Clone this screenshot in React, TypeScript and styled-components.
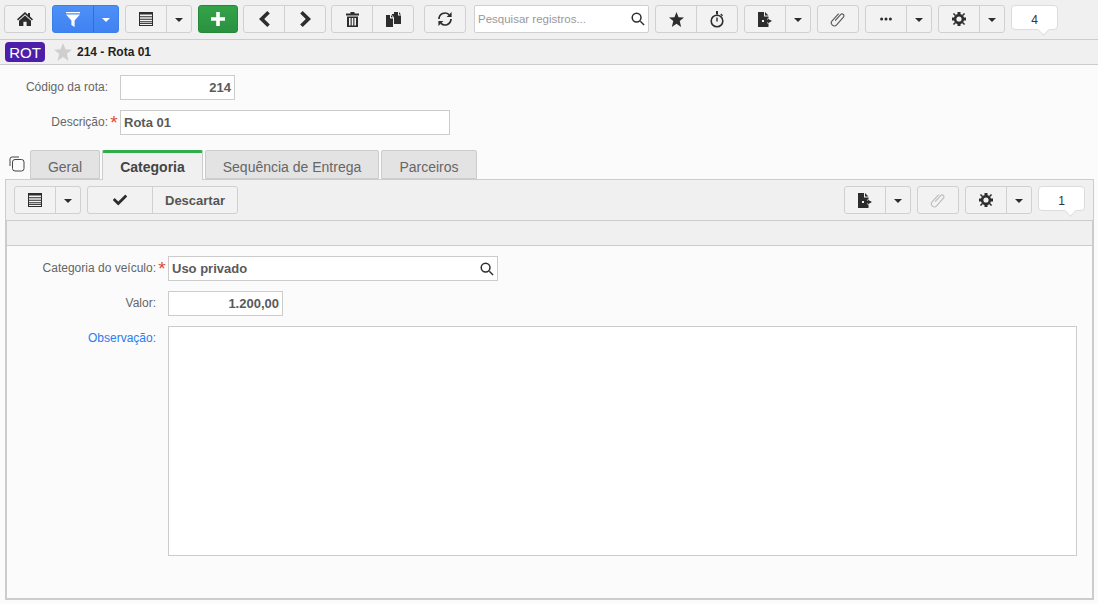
import React from "react";
import styled, { createGlobalStyle } from "styled-components";
import { FaCheck } from "react-icons/fa";

const GlobalStyle = createGlobalStyle`
  html, body { margin: 0; padding: 0; }
  body { font-family: "Liberation Sans", Arial, sans-serif; background: #fbfbfb; }
  * { box-sizing: border-box; }
`;

const Page = styled.div`
  width: 1098px;
  height: 604px;
  overflow: hidden;
  display: flex;
  flex-direction: column;
  color: #555;
`;

const Toolbar = styled.div`
  height: 40px;
  flex: none;
  display: flex;
  align-items: flex-start;
  padding: 5px 4px 0;
  background: #f0f0f0;
  border-bottom: 1px solid #ccc;
`;

const Group = styled.div<{ $gap?: number }>`
  display: flex;
  height: 28px;
  flex: none;
  margin-left: ${(p) => p.$gap ?? 0}px;
  border: 1px solid #d0d0d0;
  border-radius: 3px;
  background: #f2f2f2;
`;

const Seg = styled.div<{ $w: number; $split?: boolean; $color?: string }>`
  width: ${(p) => p.$w}px;
  display: flex;
  align-items: center;
  justify-content: center;
  color: ${(p) => p.$color ?? "#2d2d2d"};
  border-left: ${(p) => (p.$split ? "1px solid #d0d0d0" : "none")};
  font-size: 14px;
`;

const PrimaryGroup = styled(Group)`
  background: linear-gradient(#4d90f7, #3f83f2);
  border-color: #3c7fe8;
  ${Seg} { color: #fff; border-left-color: #2f6fd8; }
`;

const GreenGroup = styled(Group)`
  background: linear-gradient(#33a349, #2b9140);
  border-color: #27883b;
  ${Seg} { color: #fff; }
`;

const Caret = styled.span`
  width: 0;
  height: 0;
  border-left: 4px solid transparent;
  border-right: 4px solid transparent;
  border-top: 4px solid currentColor;
  margin-top: 1px;
`;

const SearchBox = styled.div`
  width: 175px;
  height: 28px;
  flex: none;
  margin-left: 8px;
  display: flex;
  align-items: center;
  justify-content: space-between;
  padding: 0 3px 0 3px;
  background: #fff;
  border: 1px solid #d0d0d0;
  border-radius: 2px;
  font-size: 11.5px;
  color: #999;
  svg { color: #2d2d2d; }
`;

const Counter = styled.div<{ $gap?: number }>`
  position: relative;
  width: 47px;
  height: 25px;
  flex: none;
  margin-left: ${(p) => p.$gap ?? 0}px;
  display: flex;
  align-items: center;
  justify-content: center;
  padding-top: 4px;
  background: #fff;
  border: 1px solid #dcdcdc;
  border-radius: 4px;
  font-size: 12px;
  color: #333;
  &::after {
    content: "";
    position: absolute;
    right: 9px;
    bottom: -5px;
    width: 8px;
    height: 8px;
    background: #fff;
    border-right: 1px solid #dcdcdc;
    border-bottom: 1px solid #dcdcdc;
    transform: rotate(45deg);
  }
`;

const TitleBar = styled.div`
  height: 25px;
  flex: none;
  display: flex;
  align-items: center;
  padding-left: 5px;
  background: #f0f0f0;
  border-bottom: 1px solid #ccc;
`;

const Badge = styled.span`
  width: 40px;
  height: 20px;
  display: flex;
  align-items: center;
  justify-content: center;
  border-radius: 4px;
  background: #4d1fa8;
  color: #fff;
  font-size: 15px;
`;

const TitleStar = styled.span`
  display: flex;
  margin-left: 9px;
  color: #cfcfcf;
`;

const Title = styled.span`
  margin-left: 5px;
  font-size: 12px;
  font-weight: bold;
  color: #222;
`;

const Fields = styled.div<{ $labelWidth: number }>`
  display: grid;
  grid-template-columns: ${(p) => p.$labelWidth}px 12px 1fr;
  row-gap: 10px;
  padding-top: 10px;
  justify-items: start;
`;

const Label = styled.div<{ $link?: boolean }>`
  justify-self: end;
  line-height: 25px;
  font-size: 12px;
  color: ${(p) => (p.$link ? "#2a7bf0" : "#666")};
`;

const Required = styled.div`
  justify-self: center;
  font-size: 19px;
  line-height: 25px;
  color: #e04a32;
`;

const Input = styled.div<{ $w: number; $right?: boolean }>`
  width: ${(p) => p.$w}px;
  height: 25px;
  display: flex;
  align-items: center;
  justify-content: ${(p) => (p.$right ? "flex-end" : "space-between")};
  padding: 0 3px;
  background: #fff;
  border: 1px solid #ccc;
  font-size: 13px;
  font-weight: bold;
  color: #5a5a5a;
  svg { color: #2d2d2d; }
`;

const TextArea = styled.div`
  width: 909px;
  height: 230px;
  background: #fff;
  border: 1px solid #ccc;
`;

const TabRow = styled.div`
  margin-top: 15px;
  height: 29px;
  flex: none;
  display: flex;
  align-items: flex-start;
  padding-left: 9px;
  position: relative;
  z-index: 1;
`;

const CopyIcon = styled.span`
  width: 21px;
  padding-top: 6px;
  display: flex;
  color: #444;
`;

const Tab = styled.div<{ $w: number; $active?: boolean }>`
  width: ${(p) => p.$w}px;
  height: ${(p) => (p.$active ? 30 : 29)}px;
  margin-right: 2px;
  display: flex;
  align-items: center;
  justify-content: center;
  padding-top: ${(p) => (p.$active ? 1 : 4)}px;
  font-size: 14px;
  font-weight: ${(p) => (p.$active ? "bold" : "normal")};
  color: ${(p) => (p.$active ? "#444" : "#666")};
  background: ${(p) => (p.$active ? "#f0f0f0" : "#e4e3e3")};
  border: 1px solid #ccc;
  border-top: ${(p) => (p.$active ? "3px solid #2fae4b" : "1px solid #ccc")};
  border-bottom: ${(p) => (p.$active ? "none" : "1px solid #ccc")};
  border-radius: 2px 2px 0 0;
`;

const Panel = styled.div`
  margin-left: 5px;
  width: 1089px;
  height: 421px;
  flex: none;
  display: flex;
  flex-direction: column;
  border: 1px solid #ccc;
`;

const PanelToolbar = styled.div`
  height: 40px;
  flex: none;
  display: flex;
  align-items: flex-start;
  justify-content: space-between;
  padding: 6px 8px 0;
  background: #f0f0f0;
`;

const ButtonRow = styled.div`
  display: flex;
`;

const PanelBody = styled.div`
  flex: 1;
  border: 1px solid #ccc;
`;

const GrayBar = styled.div`
  height: 25px;
  background: #f0f0f0;
  border-bottom: 1px solid #ccc;
`;

const Discard = styled.span`
  font-size: 13px;
  font-weight: bold;
  color: #555;
`;

const IconSvg = styled.svg`
  display: block;
  fill: currentColor;
`;

const HomeIcon = () => (
  <IconSvg width="16" height="14" viewBox="0 0 16 14">
    <path d="M8 0 11 2.7V1h2v3.5L16 7.3 15 8.4 8 2.3 1 8.4 0 7.3z" />
    <path d="M8 3.6 14 8.8V14H9.6V9.8H6.4V14H2V8.8z" />
  </IconSvg>
);

const FilterIcon = () => (
  <IconSvg width="14" height="15" viewBox="0 0 14 15">
    <path d="M0 0h14v1.2H0zM0 2.4h14L8.6 8.4V15L5.4 13V8.4z" />
  </IconSvg>
);

const GridIcon = () => (
  <IconSvg width="14" height="14" viewBox="0 0 14 14">
    <path d="M0 0h14v14H0zM1 2.4v1.9h12V2.4zM1 5.3v1.5h12V5.3zM1 7.8v1.5h12V7.8zM1 10.3V13h12v-2.7z" fillRule="evenodd" />
    <path d="M1 11h12v.9H1z" />
  </IconSvg>
);

const PlusIcon = () => (
  <IconSvg width="14" height="14" viewBox="0 0 14 14">
    <path d="M5.2 0h3.6v5.2H14v3.6H8.8V14H5.2V8.8H0V5.2h5.2z" />
  </IconSvg>
);

const ChevronLeft = () => (
  <IconSvg width="11" height="16" viewBox="0 0 11 16">
    <path d="M8.3 0 10.8 2.5 5.2 8l5.6 5.5L8.3 16 0 8z" />
  </IconSvg>
);

const ChevronRight = () => (
  <IconSvg width="11" height="16" viewBox="0 0 11 16">
    <path d="M2.7 0 0.2 2.5 5.8 8l-5.6 5.5L2.7 16 11 8z" />
  </IconSvg>
);

const TrashIcon = () => (
  <IconSvg width="13" height="15" viewBox="0 0 13 15">
    <path d="M4.5 0h4v1.5H13v2H0v-2h4.5zM1 4.5h11V15H1zM3 6v7.5h1.6V6zm2.7 0v7.5h1.6V6zM8.4 6v7.5H10V6z" fillRule="evenodd" />
  </IconSvg>
);

const CopyDocsIcon = () => (
  <IconSvg width="15" height="15" viewBox="0 0 15 15">
    <path d="M0 3h4v3.5h3V15H0zM5 3l2 2.3H5zM8 0h4v3.5h3V12H8V5.5L6 3V2h2zM13 0l2 2.4h-2z" />
  </IconSvg>
);

const SyncIcon = () => (
  <IconSvg width="16" height="16" viewBox="0 0 16 16">
    <path d="M2 8a6 6 0 0 1 10-4.4" fill="none" stroke="currentColor" strokeWidth="1.7" />
    <path d="M14 8a6 6 0 0 1-10 4.4" fill="none" stroke="currentColor" strokeWidth="1.7" />
    <path d="M14.6 1v5h-5zM1.4 15v-5h5z" />
  </IconSvg>
);

const SearchIcon = () => (
  <IconSvg width="14" height="14" viewBox="0 0 14 14">
    <circle cx="5.6" cy="5.6" r="4.4" fill="none" stroke="currentColor" strokeWidth="1.5" />
    <path d="M8.8 9.8 9.8 8.8 13.6 12.6 12.6 13.6z" />
  </IconSvg>
);

const StarIcon = ({ size }: { size: number }) => (
  <IconSvg width={size} height={size} viewBox="0 0 20 20">
    <path d="M10 0 12.7 6.9 20 7.4 14.3 12 16.2 20 10 15.6 3.8 20 5.7 12 0 7.4 7.3 6.9z" />
  </IconSvg>
);

const TimerIcon = () => (
  <IconSvg width="14" height="17" viewBox="0 0 14 17">
    <circle cx="7" cy="10" r="5.8" fill="none" stroke="currentColor" strokeWidth="1.6" />
    <path d="M6 0h2v3.5H6zM6.3 6.5h1.4v4H6.3zM11.2 2.6l1.8 1.6-1 1-1.7-1.6z" />
  </IconSvg>
);

const ExportIcon = () => (
  <IconSvg width="14" height="15" viewBox="0 0 14 15">
    <path d="M0 0h6v4.5h4.5V6.5H9v1.5H4v2h5v1.5h1.5V15H0zM7 0 10.5 3.5H7zM9.5 6.5 14 9l-4.5 2.5V10H6V8h3.5z" />
  </IconSvg>
);

const ClipIcon = ({ muted }: { muted?: boolean }) => (
  <IconSvg width="16" height="16" viewBox="0 0 16 16" style={{ color: muted ? "#bbb" : "#555" }}>
    <path
      d="M5.2 9.3 10.8 3a1.9 1.9 0 0 1 2.8 2.5l-7 7.9a3 3 0 0 1-4.5-4L8.7 2.2"
      fill="none"
      stroke="currentColor"
      strokeWidth="1.1"
      transform="translate(0 .4)"
    />
  </IconSvg>
);

const DotsIcon = () => (
  <IconSvg width="12" height="4" viewBox="0 0 12 4">
    <circle cx="1.6" cy="2" r="1.5" />
    <circle cx="6" cy="2" r="1.5" />
    <circle cx="10.4" cy="2" r="1.5" />
  </IconSvg>
);

const GearIcon = () => (
  <IconSvg width="14" height="14" viewBox="0 0 14 14">
    <circle cx="7" cy="7" r="3.9" fill="none" stroke="currentColor" strokeWidth="2.6" />
    <path d="M5.5 0h3v2h-3zM5.5 12h3v2h-3zM0 5.5h2v3H0zM12 5.5h2v3h-2z" />
    <path d="M2 .9 4 2.9 2.9 4 .9 2zM12 .9 13.1 2 11.1 4 10 2.9zM2 13.1.9 12 2.9 10 4 11.1zM12 13.1 10 11.1 11.1 10 13.1 12z" />
  </IconSvg>
);

const PlainCopyIcon = () => (
  <IconSvg width="16" height="16" viewBox="0 0 16 16">
    <path d="M1 10V3a2 2 0 0 1 2-2h7" fill="none" stroke="currentColor" />
    <rect x="3.5" y="3.5" width="11.5" height="11.5" rx="2.5" fill="none" stroke="currentColor" />
  </IconSvg>
);

const Split = ({ children, gap }: { children: React.ReactNode; gap?: number }) => (
  <Group $gap={gap}>
    <Seg $w={40}>{children}</Seg>
    <Seg $w={25} $split>
      <Caret />
    </Seg>
  </Group>
);

export default function App() {
  return (
    <Page>
      <GlobalStyle />
      <Toolbar>
        <Group>
          <Seg $w={40}>
            <HomeIcon />
          </Seg>
        </Group>
        <PrimaryGroup $gap={6}>
          <Seg $w={40}>
            <FilterIcon />
          </Seg>
          <Seg $w={25} $split>
            <Caret />
          </Seg>
        </PrimaryGroup>
        <Split gap={6}>
          <GridIcon />
        </Split>
        <GreenGroup $gap={6}>
          <Seg $w={38}>
            <PlusIcon />
          </Seg>
        </GreenGroup>
        <Group $gap={5}>
          <Seg $w={40}>
            <ChevronLeft />
          </Seg>
          <Seg $w={41} $split>
            <ChevronRight />
          </Seg>
        </Group>
        <Group $gap={5}>
          <Seg $w={40}>
            <TrashIcon />
          </Seg>
          <Seg $w={41} $split>
            <CopyDocsIcon />
          </Seg>
        </Group>
        <Group $gap={10}>
          <Seg $w={40}>
            <SyncIcon />
          </Seg>
        </Group>
        <SearchBox>
          Pesquisar registros...
          <SearchIcon />
        </SearchBox>
        <Group $gap={6}>
          <Seg $w={40}>
            <StarIcon size={15} />
          </Seg>
          <Seg $w={41} $split>
            <TimerIcon />
          </Seg>
        </Group>
        <Split gap={6}>
          <ExportIcon />
        </Split>
        <Group $gap={6}>
          <Seg $w={40}>
            <ClipIcon />
          </Seg>
        </Group>
        <Split gap={6}>
          <DotsIcon />
        </Split>
        <Split gap={6}>
          <GearIcon />
        </Split>
        <Counter $gap={6}>4</Counter>
      </Toolbar>

      <TitleBar>
        <Badge>ROT</Badge>
        <TitleStar>
          <StarIcon size={18} />
        </TitleStar>
        <Title>214 - Rota 01</Title>
      </TitleBar>

      <Fields $labelWidth={108}>
        <Label>Código da rota:</Label>
        <span />
        <Input $w={115} $right>
          214
        </Input>
        <Label>Descrição:</Label>
        <Required>*</Required>
        <Input $w={330}>Rota 01</Input>
      </Fields>

      <TabRow>
        <CopyIcon>
          <PlainCopyIcon />
        </CopyIcon>
        <Tab $w={70}>Geral</Tab>
        <Tab $w={101} $active>
          Categoria
        </Tab>
        <Tab $w={174}>Sequência de Entrega</Tab>
        <Tab $w={96}>Parceiros</Tab>
      </TabRow>

      <Panel>
        <PanelToolbar>
          <ButtonRow>
            <Split>
              <GridIcon />
            </Split>
            <Group $gap={6}>
              <Seg $w={64}>
                <FaCheck size={14} />
              </Seg>
              <Seg $w={85} $split>
                <Discard>Descartar</Discard>
              </Seg>
            </Group>
          </ButtonRow>
          <ButtonRow>
            <Split>
              <ExportIcon />
            </Split>
            <Group $gap={6}>
              <Seg $w={40}>
                <ClipIcon muted />
              </Seg>
            </Group>
            <Split gap={6}>
              <GearIcon />
            </Split>
            <Counter $gap={6}>1</Counter>
          </ButtonRow>
        </PanelToolbar>
        <PanelBody>
          <GrayBar />
          <Fields $labelWidth={149}>
            <Label>Categoria do veículo:</Label>
            <Required>*</Required>
            <Input $w={330}>
              Uso privado
              <SearchIcon />
            </Input>
            <Label>Valor:</Label>
            <span />
            <Input $w={115} $right>
              1.200,00
            </Input>
            <Label $link>Observação:</Label>
            <span />
            <TextArea />
          </Fields>
        </PanelBody>
      </Panel>
    </Page>
  );
}
